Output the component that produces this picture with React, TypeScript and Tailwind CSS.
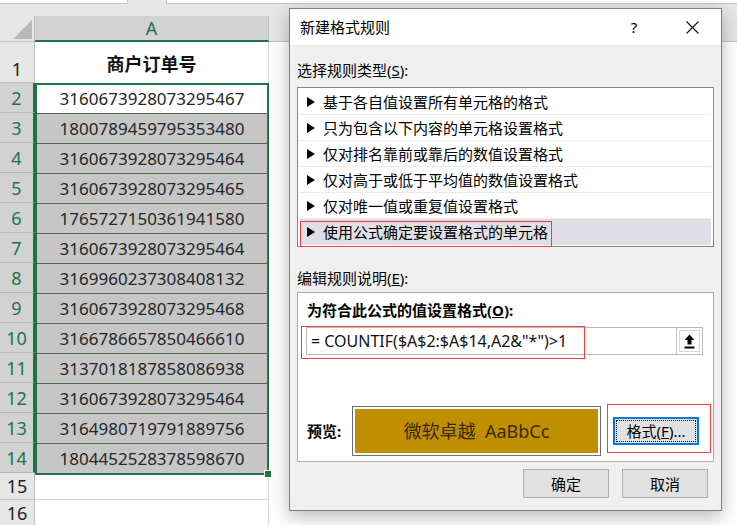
const ORDERS = [
  "3160673928073295467",
  "1800789459795353480",
  "3160673928073295464",
  "3160673928073295465",
  "1765727150361941580",
  "3160673928073295464",
  "3169960237308408132",
  "3160673928073295468",
  "3166786657850466610",
  "3137018187858086938",
  "3160673928073295464",
  "3164980719791889756",
  "1804452528378598670",
];

const RULES = [
  "基于各自值设置所有单元格的格式",
  "只为包含以下内容的单元格设置格式",
  "仅对排名靠前或靠后的数值设置格式",
  "仅对高于或低于平均值的数值设置格式",
  "仅对唯一值或重复值设置格式",
  "使用公式确定要设置格式的单元格",
];

function Sheet() {
  return (
    <div className="flex font-['Noto_Sans','Noto_Sans_CJK_SC',sans-serif]">
      {/* row headers */}
      <div className="flex w-[35px] flex-col">
        <div className="relative h-[26px] border-r border-b border-[#c0c0c0] bg-[#e6e6e6]">
          <svg className="absolute top-[4px] left-[13px]" width="19" height="19" viewBox="0 0 19 19">
            <polygon points="19,0 19,19 0,19" fill="#b9b9b9" />
          </svg>
        </div>
        <div className="flex h-[41px] items-end justify-center border-r border-b border-[#c0c0c0] bg-[#e6e6e6] pb-[1px] text-[18px] leading-[24px] text-[#222]">
          1
        </div>
        {ORDERS.map((_, i) => (
          <div
            key={i}
            className="flex h-[30px] items-center justify-center border-r-2 border-b border-r-[#217346] border-b-[#b8b8b8] bg-[#d2d2d2] text-[18px] leading-[24px] text-[#217346]"
          >
            {i + 2}
          </div>
        ))}
        {[15, 16].map((n) => (
          <div
            key={n}
            className="flex h-[27px] items-center justify-center border-r border-b border-[#c0c0c0] bg-[#e6e6e6] text-[18px] leading-[24px] text-[#222]"
          >
            {n}
          </div>
        ))}
      </div>

      {/* column A */}
      <div className="flex w-[234px] flex-col">
        <div className="flex h-[26px] items-center justify-center border-r border-b-2 border-r-[#c0c0c0] border-b-[#217346] bg-[#d2d2d2] text-[18px] leading-[24px] text-[#217346]">
          A
        </div>
        <div className="flex h-[41px] items-center justify-center border-r border-[#d4d4d4] bg-white pt-[3px] text-[18px] font-bold leading-[24px] text-[#111]">
          商户订单号
        </div>
        <div className="relative flex h-[392px] flex-col border-2 border-[#217346]">
          {ORDERS.map((v, i) => (
            <div
              key={i}
              className={
                i === 0
                  ? "flex h-[28px] items-center justify-center bg-white text-[17px] leading-[22px] text-[#262626]"
                  : "flex h-[30px] items-center justify-center border-t border-[#4f6a44] bg-[#c6c6c6] text-[17px] leading-[22px] text-[#262626]"
              }
            >
              {v}
            </div>
          ))}
          <div className="absolute -right-[5px] -bottom-[5px] h-[8px] w-[8px] border border-white bg-[#217346]" />
        </div>
        <div className="h-[25px] border-r border-b border-[#d4d4d4]" />
        <div className="h-[27px] border-r border-b border-[#d4d4d4]" />
      </div>

      {/* rest of the sheet */}
      <div className="flex flex-1 flex-col">
        <div className="h-[26px] border-b border-[#c0c0c0] bg-[#e6e6e6]" />
        <div className="flex-1 bg-white" />
      </div>
    </div>
  );
}

function Triangle() {
  return (
    <svg width="8" height="10" viewBox="0 0 8 10">
      <polygon points="0,0 8,5 0,10" fill="#000" />
    </svg>
  );
}

function Dialog() {
  return (
    <div className="absolute top-[8px] left-[289px] flex h-[503px] w-[433px] flex-col border border-[#7f7f7f] bg-[#f0f0f0] font-['Noto_Sans','Noto_Sans_CJK_SC',sans-serif] text-[15px] text-black shadow-[0_6px_18px_rgba(0,0,0,0.28)]">
      <div className="flex h-[36px] items-center bg-white pl-[10px]">
        <span className="leading-[20px]">新建格式规则</span>
        <span className="ml-auto w-[20px] text-center leading-[20px]">?</span>
        <span className="mr-[17px] ml-[36px] flex w-[24px] justify-center">
          <svg width="13" height="13" viewBox="0 0 13 13">
            <path d="M0.5 0.5 L12.5 12.5 M12.5 0.5 L0.5 12.5" stroke="#111" strokeWidth="1.1" />
          </svg>
        </span>
      </div>

      <div className="flex flex-1 flex-col px-[7px] pt-[15px]">
        <div className="leading-[20px]">
          选择规则类型(<span className="underline">S</span>):
        </div>

        <div className="mt-[7px] flex h-[160px] flex-col border border-[#828790] bg-white px-[2px] pt-[1px]">
          {RULES.map((r, i) => {
            const last = i === RULES.length - 1;
            return (
              <div
                key={r}
                className={
                  last
                    ? "relative flex h-[26px] items-center gap-[8px] bg-[#dfdfe5] pl-[7px]"
                    : "flex h-[26px] items-center gap-[8px] border-b border-[#ececec] pl-[7px]"
                }
              >
                <Triangle />
                <span className="leading-[20px]">{r}</span>
                {last && (
                  <div className="absolute top-[2px] left-0 h-[26px] w-[252px] border-[1.5px] border-[#e8413f]" />
                )}
              </div>
            );
          })}
        </div>

        <div className="mt-[21px] leading-[20px]">
          编辑规则说明(<span className="underline">E</span>):
        </div>

        <div className="relative mt-[4px] flex h-[170px] flex-col border border-[#acacac] bg-white pt-[7px] pl-[8px]">
          <div className="pl-[1px] font-bold leading-[20px]">
            为符合此公式的值设置格式(<span className="underline">O</span>):
          </div>
          <div className="mt-[7px] flex h-[28px] w-[397px] border border-[#b9b9b9]">
            <div className="flex flex-1 items-center pl-[4px] text-[16px] leading-[20px] text-[#111]">
              = COUNTIF($A$2:$A$14,A2&amp;"*")&gt;1
            </div>
            <div className="flex w-[26px] items-center justify-center border-l border-[#c4c4c4] p-[2px]">
              <div className="flex h-full w-full items-center justify-center border border-[#d6d6d6] bg-white">
                <svg width="11" height="15" viewBox="0 0 11 15">
                  <polygon points="5.5,0.5 10.5,6 7.5,6 7.5,10.5 3.5,10.5 3.5,6 0.5,6" fill="#000" />
                  <rect x="0.5" y="12.5" width="10" height="2" fill="#000" />
                </svg>
              </div>
            </div>
          </div>
          <div className="absolute top-[33px] left-[3px] h-[33px] w-[284px] border-[1.5px] border-[#e8413f]" />

          <div className="mt-auto mb-[5px] flex items-start">
            <div className="flex h-[50px] w-[46px] items-center pl-[1px] font-bold leading-[20px]">预览:</div>
            <div className="h-[50px] w-[249px] border border-[#6d6d6d] bg-white p-[2px]">
              <div className="flex h-full w-full items-center justify-center bg-[#bf8f00] text-[18px] leading-[24px] whitespace-pre text-[#3a2900]">
                微软卓越  AaBbCc
              </div>
            </div>
            <div className="-mt-[2px] ml-[6px] h-[49px] w-[104px] border-[1.5px] border-[#e8413f] pt-[12px] pl-[5px]">
              <div className="h-[28px] w-[86px] border-2 border-[#0078d7] bg-[#e1e1e1] p-[1px]">
                <div className="flex h-full w-full items-center justify-center border border-dotted border-[#111] leading-[20px]">
                  格式(<span className="underline">F</span>)...
                </div>
              </div>
            </div>
          </div>
        </div>

        <div className="mt-[7px] flex justify-end gap-[13px] pr-[6px]">
          <div className="flex h-[29px] w-[86px] items-center justify-center border border-[#adadad] bg-[#e1e1e1] leading-[20px]">
            确定
          </div>
          <div className="flex h-[29px] w-[86px] items-center justify-center border border-[#adadad] bg-[#e1e1e1] leading-[20px]">
            取消
          </div>
        </div>
      </div>
    </div>
  );
}

export default function App() {
  return (
    <div className="relative h-[525px] w-[737px] overflow-hidden bg-white">
      <div className="flex h-[16px] bg-[#e6e6e6]">
        <div className="h-[4px] w-[128px] border-r border-b border-[#c6c6c6] bg-white" />
        <div className="ml-[38px] h-[4px] flex-1 border-b border-l border-[#c6c6c6] bg-white" />
      </div>
      <Sheet />
      <Dialog />
    </div>
  );
}
